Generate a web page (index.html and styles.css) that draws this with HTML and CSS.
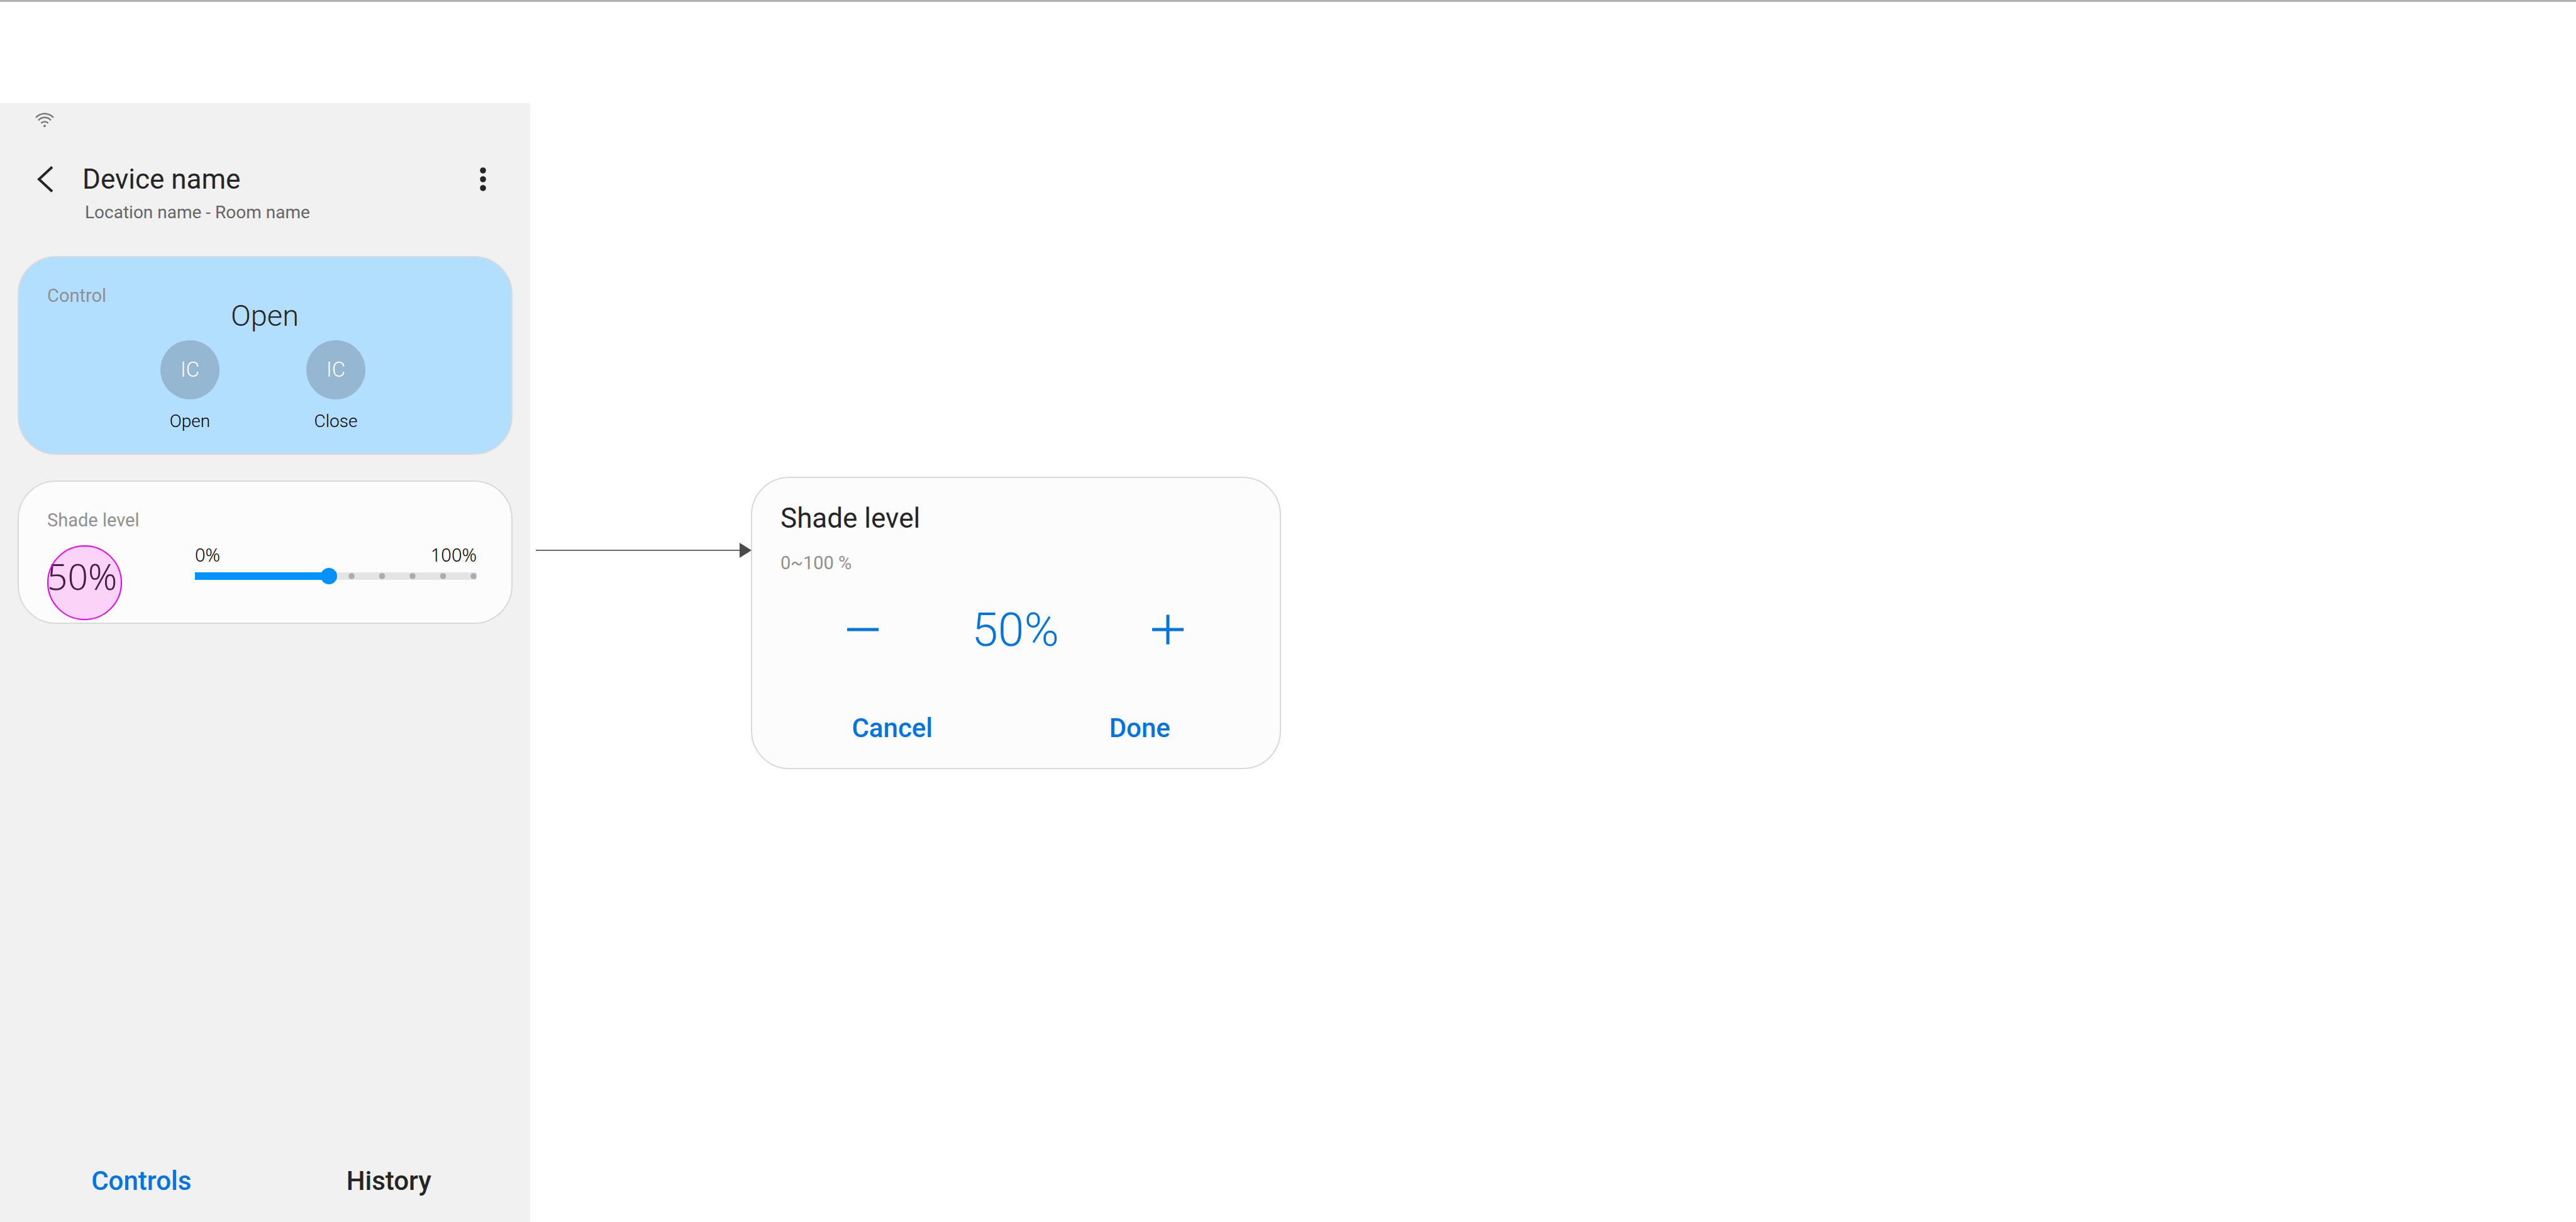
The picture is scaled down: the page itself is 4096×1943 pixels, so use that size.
FILE: index.html
```html
<!DOCTYPE html>
<html lang="en">
<head>
<meta charset="utf-8">
<meta name="viewport" content="width=device-width, initial-scale=1">
<title>Device name</title>
<link rel="stylesheet" href="styles.css">
</head>
<body>
<main class="board">
  <section class="phone">
    <div class="status-bar">
      <svg class="icon-wifi" viewBox="0 0 30 24" role="img" aria-label="Wi-Fi">
        <g fill="none" stroke="#7a7a7a" stroke-width="2.5">
          <path d="M1 7.9a19.1 19.1 0 0 1 28 0"/>
          <path d="M5.1 12.4a12.9 12.9 0 0 1 19.8 0"/>
          <path d="M9.4 16.8a7.7 7.7 0 0 1 11.2 0"/>
        </g>
        <circle cx="15" cy="21.2" r="2" fill="#7a7a7a"/>
      </svg>
    </div>

    <header class="app-bar">
      <button class="icon-button" type="button" aria-label="Back">
        <svg class="icon-back" viewBox="0 0 26 42"><path d="M24 1.5 3 21l21 19.5" fill="none" stroke="#252525" stroke-width="4"/></svg>
      </button>
      <h1 class="title">Device name</h1>
      <button class="icon-button" type="button" aria-label="More options">
        <svg class="icon-more" viewBox="0 0 10 38" fill="#252525"><circle cx="5" cy="5" r="4.8"/><circle cx="5" cy="19" r="4.8"/><circle cx="5" cy="33" r="4.8"/></svg>
      </button>
      <p class="location">Location name - Room name</p>
    </header>

    <div class="cards">
      <section class="card card-active">
        <div class="card-head">
          <h2 class="caption">Control</h2>
          <p class="state">Open</p>
        </div>
        <div class="actions">
          <button class="action" type="button"><span class="action-icon">IC</span><span>Open</span></button>
          <button class="action" type="button"><span class="action-icon">IC</span><span>Close</span></button>
        </div>
      </section>

      <section class="card">
        <h2 class="caption"><label for="shade">Shade level</label></h2>
        <div class="level">
          <div class="level-value">50%<span class="touch-mark"></span></div>
          <div class="level-slider">
            <div class="range-labels"><span>0%</span><span>100%</span></div>
            <div class="track">
              <svg class="ticks" viewBox="0 0 204 10" fill="#acacac"><circle cx="5" cy="5" r="4.8"/><circle cx="53.5" cy="5" r="4.8"/><circle cx="102" cy="5" r="4.8"/><circle cx="150.5" cy="5" r="4.8"/><circle cx="199" cy="5" r="4.8"/></svg>
              <input class="slider" id="shade" type="range" min="0" max="100" value="50">
            </div>
          </div>
        </div>
      </section>
    </div>

    <nav class="tabs">
      <a class="tab tab-current" href="#controls" aria-current="page">Controls</a>
      <a class="tab" href="#history">History</a>
    </nav>
  </section>

  <div class="arrow">
    <span class="arrow-line"></span>
    <svg class="arrow-head" viewBox="0 0 19 24"><path d="M0 0 19 12 0 24z" fill="#4a4a4a"/></svg>
  </div>

  <section class="dialog" role="dialog" aria-labelledby="dialog-title">
    <h2 class="dialog-title" id="dialog-title">Shade level</h2>
    <p class="dialog-range">0~100 %</p>
    <div class="stepper">
      <button class="icon-button" type="button" aria-label="Decrease">
        <svg class="icon-step" viewBox="0 0 50 48"><path d="M0 24h50" stroke="#0074e0" stroke-width="5"/></svg>
      </button>
      <output class="stepper-value">50%</output>
      <button class="icon-button" type="button" aria-label="Increase">
        <svg class="icon-step" viewBox="0 0 50 48"><path d="M0 24h50M25 .5v47" stroke="#0074e0" stroke-width="5"/></svg>
      </button>
    </div>
    <div class="dialog-actions">
      <button class="text-button" type="button">Cancel</button>
      <button class="text-button" type="button">Done</button>
    </div>
  </section>
</main>
</body>
</html>
```
FILE: styles.css
```css
* {
  box-sizing: border-box;
}

body {
  margin: 0;
  min-height: 100vh;
  display: flex;
  flex-direction: column;
  padding-top: 161px;
  border-top: 3px solid #b2b2b2;
  background: #fefefe;
  color: #252525;
  font-family: Roboto, sans-serif;
}

h1,
h2,
p {
  margin: 0;
  font-weight: 400;
}

button {
  padding: 0;
  border: 0;
  background: none;
  color: inherit;
  font: inherit;
  cursor: pointer;
}

svg {
  display: block;
}

.board {
  flex: 1;
  display: grid;
  grid-template-columns: 843fr 351fr 843fr 2059fr;
  align-items: start;
}

/* Phone screen */

.phone {
  align-self: stretch;
  display: flex;
  flex-direction: column;
  padding: 15px 28px 40px;
  background: #f1f1f1;
}

.status-bar {
  padding-left: 28px;
}

.icon-wifi {
  width: 30px;
  height: 24px;
}

.app-bar {
  display: grid;
  grid-template-columns: auto 1fr auto;
  align-items: center;
  margin-top: 56px;
  padding: 0 42px 0 31px;
}

.icon-back {
  width: 26px;
  height: 42px;
}

.icon-more {
  width: 10px;
  height: 38px;
}

.title {
  padding-left: 46px;
  font-size: 44px;
  line-height: 52px;
}

.location {
  grid-column: 2;
  margin-top: 11px;
  padding-left: 50px;
  color: #666;
  font-size: 28px;
  line-height: 32px;
}

.cards {
  display: flex;
  flex-direction: column;
  gap: 41px;
  margin-top: 53px;
}

.card {
  padding: 43px 55px 3px 45px;
  border: 2px solid #dadada;
  border-radius: 61px;
  background: #fcfcfc;
}

.card-active {
  padding-right: 46px;
  padding-bottom: 35px;
  background: #b2deff;
}

.card-head {
  display: grid;
  grid-template-columns: 1fr auto 1fr;
  align-items: start;
}

.caption {
  color: #909090;
  font-size: 29px;
  line-height: 36px;
}

.state {
  margin-top: 23px;
  font-size: 47px;
  font-weight: 300;
  line-height: 54px;
}

.actions {
  display: flex;
  justify-content: center;
  gap: 138px;
  margin-top: 12px;
  padding-right: 6px;
}

.action {
  width: 94px;
  display: flex;
  flex-direction: column;
  align-items: center;
  gap: 19px;
  color: #000;
  font-size: 28px;
  font-weight: 300;
  line-height: 32px;
}

.action-icon {
  display: grid;
  place-items: center;
  width: 94px;
  height: 94px;
  border-radius: 50%;
  background: #95b7d1;
  color: #fff;
  font-size: 33px;
}

.level {
  display: grid;
  grid-template-columns: 235px 1fr;
  margin-top: 21px;
  font-family: "Noto Sans", "Open Sans", sans-serif;
}

.level-value {
  position: relative;
  height: 121px;
  padding-top: 18px;
  font-size: 57px;
  font-weight: 300;
  line-height: 64px;
}

.touch-mark {
  position: absolute;
  top: 1px;
  left: 0;
  width: 119px;
  height: 119px;
  border: 2px solid #ea00ea;
  border-radius: 50%;
  background: rgba(234, 0, 234, 0.16);
}

.range-labels {
  display: flex;
  justify-content: space-between;
  color: #000;
  font-size: 29px;
  font-weight: 350;
  line-height: 32px;
}

.track {
  display: grid;
  align-items: center;
  height: 26px;
  margin-top: 5px;
  background: linear-gradient(#e5e5e5, #e5e5e5) center / 100% 12px no-repeat;
}

.ticks,
.slider {
  grid-area: 1 / 1;
}

.ticks {
  justify-self: end;
  width: 204px;
  height: 10px;
}

.slider {
  appearance: none;
  width: 95%;
  height: 26px;
  margin: 0;
  background: linear-gradient(#0391ff, #0391ff) left center / 50% 12px no-repeat;
}

.slider::-webkit-slider-thumb {
  appearance: none;
  width: 26px;
  height: 26px;
  border-radius: 50%;
  background: #0391ff;
}

.tabs {
  display: flex;
  margin-top: auto;
}

.tab {
  flex: 1;
  color: #252525;
  font-size: 42px;
  font-weight: 500;
  line-height: 50px;
  text-align: center;
  text-decoration: none;
}

.tab-current {
  color: #0074e0;
}

/* Arrow from the screen to the dialog */

.arrow {
  display: flex;
  align-items: center;
  margin: 699px -1px 0 9px;
  z-index: 1;
}

.arrow-line {
  flex: 1;
  height: 2px;
  background: #6e6e6e;
}

.arrow-head {
  width: 19px;
  height: 24px;
}

/* Dialog */

.dialog {
  margin-top: 594px;
  padding: 38px 26px;
  border: 2px solid #dadada;
  border-radius: 61px;
  background: #fcfcfc;
}

.dialog-title {
  padding-left: 19px;
  font-size: 44px;
  line-height: 52px;
}

.dialog-range {
  margin-top: 27px;
  padding-left: 19px;
  color: #909090;
  font-size: 29px;
  line-height: 36px;
}

.stepper {
  display: flex;
  justify-content: space-between;
  align-items: center;
  margin-top: 44px;
  padding: 0 127px 0 125px;
  color: #0074e0;
}

.icon-step {
  width: 50px;
  height: 48px;
}

.stepper-value {
  font-size: 75px;
  font-weight: 300;
  line-height: 88px;
}

.dialog-actions {
  display: flex;
  margin-top: 88px;
}

.text-button {
  flex: 1;
  color: #0074e0;
  font-size: 42px;
  font-weight: 500;
  line-height: 50px;
}
```
